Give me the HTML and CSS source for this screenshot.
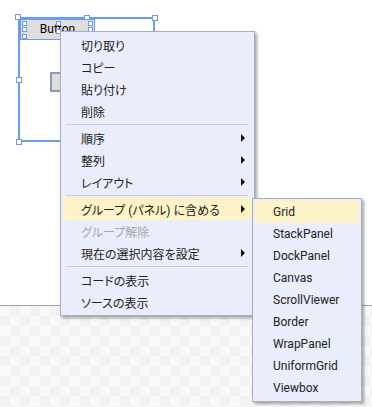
FILE: index.html
```html
<!DOCTYPE html>
<html lang="ja">
<head>
    <meta charset="UTF-8">
    <title>デザイナー</title>
    <link rel="stylesheet" href="styles.css">
</head>
<body>
    <div class="designer">
        <div class="artboard">
            <div class="panel-sel">
                <span class="handle h-tl"></span>
                <span class="handle h-tm"></span>
                <span class="handle h-tr"></span>
                <span class="handle h-ml"></span>
                <span class="handle h-bl"></span>

                <div class="btn-big">
                    Button
                    <span class="mini mini-tl"></span>
                    <span class="mini mini-ml"></span>
                    <span class="mini mini-bl"></span>
                    <span class="mini mini-tm"></span>
                    <span class="mini mini-cm"></span>
                    <span class="mini mini-tr"></span>
                    <span class="mini mini-mr"></span>
                    <span class="mini mini-br"></span>
                </div>
                <div class="btn-small"></div>
            </div>
        </div>
        <div class="checker"></div>

        <div class="context-menu">
            <div class="item">切り取り</div>
            <div class="item">コピー</div>
            <div class="item">貼り付け</div>
            <div class="item">削除</div>
            <div class="sep"></div>
            <div class="item">順序<span class="arrow"></span></div>
            <div class="item">整列<span class="arrow"></span></div>
            <div class="item">レイアウト<span class="arrow"></span></div>
            <div class="sep"></div>
            <div class="item active">グループ (パネル) に含める<span class="arrow"></span></div>
            <div class="item disabled">グループ解除</div>
            <div class="item">現在の選択内容を設定<span class="arrow"></span></div>
            <div class="sep"></div>
            <div class="item">コードの表示</div>
            <div class="item">ソースの表示</div>
        </div>

        <div class="submenu">
            <div class="item active">Grid</div>
            <div class="item">StackPanel</div>
            <div class="item">DockPanel</div>
            <div class="item">Canvas</div>
            <div class="item">ScrollViewer</div>
            <div class="item">Border</div>
            <div class="item">WrapPanel</div>
            <div class="item">UniformGrid</div>
            <div class="item">Viewbox</div>
        </div>
    </div>
</body>
</html>
```

FILE: styles.css
```css
body {
    margin: 0;
    font-family: Roboto, "Noto Sans CJK JP", sans-serif;
    font-size: 12px;
    color: #222;
}

.designer {
    position: relative;
    width: 372px;
    height: 407px;
    overflow: hidden;
    display: flex;
    flex-direction: column;
}

.artboard {
    height: 305px;
    background: #fff;
    border-bottom: 1px solid #a3a3a3;
    position: relative;
}

.checker {
    flex: 1;
    background: repeating-conic-gradient(#f2f2f2 0 25%, #f9f9f9 0 50%) 0 0 / 20px 20px;
}

/* selected panel on the canvas */
.panel-sel {
    position: absolute;
    left: 18px;
    top: 17px;
    width: 133px;
    height: 121px;
    border: 2px solid #6b9bf0;
}

.handle {
    position: absolute;
    width: 4px;
    height: 4px;
    background: #fff;
    border: 1px solid #6b9bf0;
}

.h-tl { left: -5px; top: -5px; }
.h-tm { left: 64px; top: -4px; }
.h-tr { right: -5px; top: -4px; }
.h-ml { left: -4px; top: 58px; }
.h-bl { left: -4px; bottom: -5px; }

.btn-big {
    position: absolute;
    left: 0;
    top: 0;
    width: 73px;
    height: 19px;
    background: #dedede;
    border: 1px solid #6b9bf0;
    text-align: center;
    line-height: 19px;
    color: #000;
}

.mini {
    position: absolute;
    width: 3px;
    height: 3px;
    background: #fff;
    border: 1px solid #6b9bf0;
}

.mini-tl { left: 1px; top: 1px; }
.mini-ml { left: 1px; top: 7px; }
.mini-bl { left: 1px; top: 14px; }
.mini-tm { left: 35px; top: 1px; }
.mini-cm { left: 35px; top: 9px; }
.mini-tr { right: 1px; top: 1px; }
.mini-mr { right: 1px; top: 7px; }
.mini-br { right: 1px; top: 14px; }

.btn-small {
    position: absolute;
    left: 30px;
    top: 53px;
    width: 30px;
    height: 18px;
    background: #dedede;
    border: 1px solid #7a9be0;
    box-shadow: inset 0 0 0 1px #9a9a9a;
}

/* context menu */
.context-menu,
.submenu {
    position: absolute;
    background: #e9edfc;
    border: 1px solid #a9aebf;
    padding: 2px;
    box-shadow: 2px 2px 3px rgba(0, 0, 0, 0.35);
}

.context-menu {
    left: 60px;
    top: 31px;
    width: 189px;
    font-feature-settings: "palt";
}

.submenu {
    left: 252px;
    top: 198px;
    width: 104px;
}

.item {
    height: 22px;
    padding: 0 7px 0 18px;
    display: flex;
    align-items: center;
    justify-content: space-between;
    white-space: nowrap;
}

.item.active {
    background: #fdf3c6;
}

.item.disabled {
    color: #a8a8a8;
}

.sep {
    height: 1px;
    background: #c9cbd8;
    margin: 2px 4px 2px 3px;
}

.arrow {
    width: 0;
    height: 0;
    border-left: 4px solid #111;
    border-top: 4px solid transparent;
    border-bottom: 4px solid transparent;
}
```
